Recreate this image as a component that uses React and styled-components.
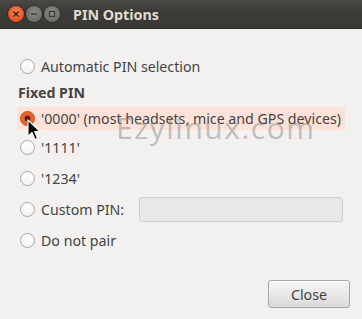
import React from "react";
import styled, { createGlobalStyle } from "styled-components";

const Global = createGlobalStyle`
  html, body { margin: 0; padding: 0; background: #f2f1f0; }
  body { font-family: "Noto Sans", "Open Sans", sans-serif; }
`;

const Window = styled.div`
  width: 362px;
  height: 319px;
  display: flex;
  flex-direction: column;
  background: #f2f1f0;
  position: relative;
  overflow: hidden;
`;

const TitleBar = styled.div`
  height: 29px;
  flex: none;
  display: flex;
  align-items: center;
  padding-left: 8px;
  background: linear-gradient(#4a4945, #3c3b37 40%, #3a3935);
  border-bottom: 1px solid #2b2a27;
  box-sizing: border-box;
`;

const Controls = styled.div`
  display: flex;
  gap: 2px;
  margin-right: 13px;
`;

const WinBtn = styled.div`
  width: 16px;
  height: 16px;
  border-radius: 50%;
  display: flex;
  align-items: center;
  justify-content: center;
  background: ${(p) =>
    p.$close
      ? "radial-gradient(circle at 50% 40%, #f48a5a, #e1501f 70%, #c8441a)"
      : "radial-gradient(circle at 50% 40%, #8a8984, #6e6d68 70%, #5c5b57)"};
  box-shadow: 0 0 0 1px #2e2d2a;
`;

const Title = styled.div`
  color: #dfdbd2;
  font-weight: bold;
  font-size: 14.3px;
  font-family: "Noto Sans", "Open Sans", sans-serif;
`;

const Body = styled.div`
  flex: 1;
  display: flex;
  flex-direction: column;
  padding: 22px 17px 0 17px;
  position: relative;
`;

const Row = styled.label`
  display: flex;
  align-items: center;
  white-space: nowrap;
  height: ${(p) => p.$h || 31}px;
  color: #444;
  font-size: 14.2px;
  padding-left: 3px;
  background: ${(p) => (p.$hl ? "#fce2d9" : "transparent")};
  align-self: ${(p) => (p.$hl ? "flex-start" : "stretch")};
  padding-right: ${(p) => (p.$hl ? "4px" : "0")};
  margin-bottom: ${(p) => (p.$hl ? "2px" : "0")};
`;

const Radio = styled.span`
  width: 15px;
  height: 15px;
  border-radius: 50%;
  flex: none;
  margin-right: 6px;
  box-sizing: border-box;
  border: 1px solid ${(p) => (p.$on ? "#c2461b" : "#a8a8a6")};
  background: ${(p) =>
    p.$on
      ? "radial-gradient(circle, #4a2416 0 2.5px, #e35a27 3.2px, #f07a4a 100%)"
      : "linear-gradient(#ffffff, #f3f2f1)"};
  display: inline-block;
`;

const Heading = styled.div`
  font-weight: bold;
  font-size: 14.2px;
  color: #444;
  height: 20px;
  display: flex;
  align-items: center;
  padding-left: 1px;
  margin-bottom: 5px;
`;

const Input = styled.div`
  margin-left: auto;
  width: 204px;
  height: 25px;
  box-sizing: border-box;
  border: 1px solid #cfcdca;
  border-radius: 3px;
  background: #e9e8e6;
  margin-right: 2px;
`;

const Footer = styled.div`
  display: flex;
  justify-content: flex-end;
  padding: 0 12px 11px 0;
  margin-top: auto;
`;

const Button = styled.button`
  width: 82px;
  height: 28px;
  border: 1px solid #a7a6a3;
  border-radius: 3px;
  background: linear-gradient(#f7f6f5, #dcdad7);
  color: #444;
  font-family: "Noto Sans", "Open Sans", sans-serif;
  font-size: 14.2px;
  box-shadow: inset 0 1px 0 #fff;
`;

const Watermark = styled.div`
  position: absolute;
  left: 116px;
  top: 107px;
  font-family: "Open Sans", "Noto Sans", sans-serif;
  font-size: 30px;
  letter-spacing: 1.5px;
  white-space: nowrap;
  color: rgba(140, 140, 140, 0.5);
  pointer-events: none;
`;

const Cursor = styled.svg`
  position: absolute;
  left: 27px;
  top: 119px;
`;

export default function App() {
  return (
    <Window>
      <Global />
      <TitleBar>
        <Controls>
          <WinBtn $close>
            <svg width="8" height="8" viewBox="0 0 8 8">
              <path d="M1.5 1.5 L6.5 6.5 M6.5 1.5 L1.5 6.5" stroke="#3a1a0c" strokeWidth="1.3" />
            </svg>
          </WinBtn>
          <WinBtn>
            <svg width="8" height="8" viewBox="0 0 8 8">
              <path d="M1 4 H7" stroke="#3d3c38" strokeWidth="1.4" />
            </svg>
          </WinBtn>
          <WinBtn>
            <svg width="8" height="8" viewBox="0 0 8 8">
              <rect x="1.5" y="1.5" width="5" height="5" fill="none" stroke="#3d3c38" strokeWidth="1.2" />
            </svg>
          </WinBtn>
        </Controls>
        <Title>PIN Options</Title>
      </TitleBar>
      <Body>
        <Row>
          <Radio />
          Automatic PIN selection
        </Row>
        <Heading>Fixed PIN</Heading>
        <Row $hl $h={23}>
          <Radio $on />
          '0000' (most headsets, mice and GPS devices)
        </Row>
        <Row>
          <Radio />
          '1111'
        </Row>
        <Row>
          <Radio />
          '1234'
        </Row>
        <Row>
          <Radio />
          Custom PIN:
          <Input />
        </Row>
        <Row>
          <Radio />
          Do not pair
        </Row>
      </Body>
      <Footer>
        <Button>Close</Button>
      </Footer>
      <Watermark>Ezylinux.com</Watermark>
      <Cursor width="14" height="22" viewBox="0 0 14 22">
        <path d="M1 1 L1 17.5 L5 13.5 L8 20.5 L10.5 19.3 L7.6 12.6 L13 12.6 Z" fill="#000" stroke="#fff" strokeWidth="1.1" strokeLinejoin="round" />
      </Cursor>
    </Window>
  );
}
